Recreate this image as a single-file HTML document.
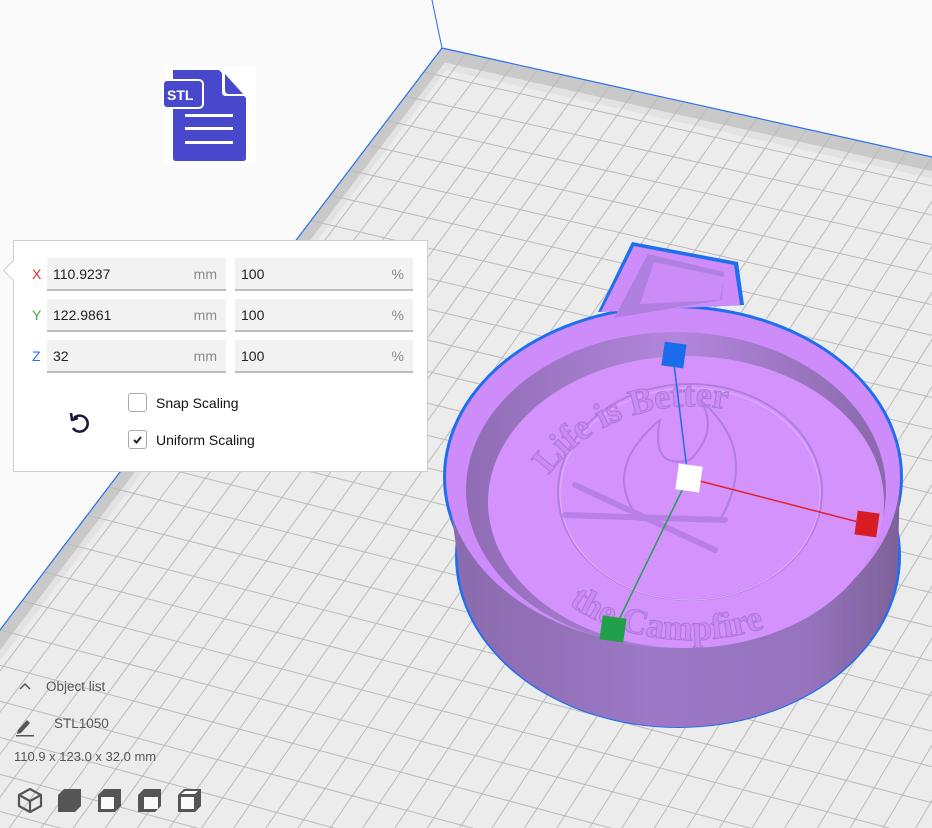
<!DOCTYPE html>
<html><head><meta charset="utf-8">
<style>
html,body{margin:0;padding:0;width:932px;height:828px;overflow:hidden;background:#fafafa;font-family:"Liberation Sans",sans-serif;}
#scene{position:absolute;left:0;top:0;}
.panel{position:absolute;left:13px;top:240px;width:415px;height:232px;background:#fff;border:1px solid #cfcfcf;box-sizing:border-box;}
.arrow{position:absolute;left:-8px;top:22px;width:14px;height:14px;background:#fff;border-left:1px solid #cfcfcf;border-bottom:1px solid #cfcfcf;transform:rotate(45deg);}
.lbl{position:absolute;left:18px;font-size:14px;}
.fld{position:absolute;height:33px;background:#f2f2f2;border-bottom:2px solid #bdbdbd;box-sizing:border-box;font-size:14px;color:#222;}
.fld span.v{position:absolute;left:6px;top:8px;}
.fld span.u{position:absolute;right:9px;top:8px;color:#8a8a8a;}
.cb{position:absolute;left:114px;width:19px;height:19px;border:1px solid #aaa;border-radius:3px;box-sizing:border-box;background:#fff;}
.cbt{position:absolute;left:142px;font-size:14px;color:#111;}
.bt{position:absolute;font-size:13.5px;color:#555;}
</style></head><body>
<svg id="scene" width="932" height="828" viewBox="0 0 932 828" xmlns="http://www.w3.org/2000/svg">
<defs>
 <linearGradient id="side" x1="0" y1="0" x2="1" y2="0">
  <stop offset="0" stop-color="#8a6aad"/><stop offset="0.45" stop-color="#9c78c6"/><stop offset="0.8" stop-color="#9673be"/><stop offset="1" stop-color="#7d6198"/>
 </linearGradient>
 <linearGradient id="wall" x1="0" y1="0" x2="1" y2="0">
  <stop offset="0" stop-color="#8f6cb4"/><stop offset="0.5" stop-color="#b286dc"/><stop offset="1" stop-color="#8a69ab"/>
 </linearGradient>
</defs>
<g id="plate"></g>
<line x1="432" y1="0" x2="442" y2="48" stroke="#2a6ff0" stroke-width="1"/>
<g id="obj">
 <ellipse cx="678" cy="556" rx="223" ry="172" fill="#1e6ff0"/>
 <ellipse cx="673" cy="477" rx="230" ry="172" fill="#1e6ff0"/>
 <path d="M598 312 L632 242 L738 262 L744 305 Z" fill="#1e6ff0"/>
 <ellipse cx="678" cy="556" rx="220" ry="169" fill="url(#side)"/>
 <path d="M447 482 L458 560 A220 169 0 0 0 898 556 L900 480 Z" fill="url(#side)"/>
 <ellipse cx="673" cy="477" rx="227" ry="169" fill="#cd8cfa"/>
 <path d="M601 312 L634 246 L734 265 L740 305 Z" fill="#cd8cfa"/>
 <path d="M614 318 L648 254 L724 272 L722 300 Z" fill="#b080e0"/>
 <path d="M654 262 L724 277 L720 300 L640 304 Z" fill="#cb8cf8"/>
 <ellipse cx="676" cy="490" rx="210" ry="158" fill="url(#wall)"/>
 <ellipse cx="686" cy="502" rx="198" ry="146" fill="#d493fc"/>
 <ellipse cx="690" cy="492" rx="132" ry="108" fill="none" stroke="#b17ee0" stroke-width="2"/>
 <ellipse cx="690" cy="494" rx="130" ry="106" fill="none" stroke="#e3b0ff" stroke-width="1"/>
 <path id="arcT" d="M530 520 A165 135 0 0 1 850 500" fill="none"/>
 <path id="arcB" d="M520 520 A170 120 0 0 0 860 520" fill="none"/>
 <text font-family="Liberation Serif,serif" font-size="36" font-weight="bold" fill="#cc8af5" stroke="#a878d6" stroke-width="1"><textPath href="#arcT" startOffset="12%">Life is Better</textPath></text>
 <text font-family="Liberation Serif,serif" font-size="36" font-weight="bold" fill="#cc8af5" stroke="#a878d6" stroke-width="1"><textPath href="#arcB" startOffset="22%">the Campfire</textPath></text>
 <path d="M640 520 Q600 470 660 420 Q650 470 690 460 Q720 430 700 400 Q760 450 720 520 Z" fill="none" stroke="#b17ee0" stroke-width="2"/>
 <path d="M575 485 L715 550 M565 515 L725 520" stroke="#b880e6" stroke-width="6" fill="none" stroke-linecap="round"/>
 <line x1="688" y1="478" x2="673" y2="356" stroke="#1e6ff0" stroke-width="1.5"/>
 <line x1="688" y1="478" x2="866" y2="524" stroke="#e0202a" stroke-width="1.5"/>
 <line x1="688" y1="478" x2="614" y2="630" stroke="#20a050" stroke-width="1.5"/>
 <rect x="663" y="343" width="22" height="24" fill="#1a6cec" transform="rotate(8 674 355)"/>
 <rect x="856" y="512" width="22" height="24" fill="#d81c24" transform="rotate(8 867 524)"/>
 <rect x="601" y="617" width="24" height="24" fill="#20a048" transform="rotate(8 613 629)"/>
 <rect x="677" y="465" width="24" height="26" fill="#ffffff" transform="rotate(8 689 478)"/>
</g>
<rect x="165" y="67" width="91" height="97" fill="#fff"/>
<path d="M173 70 L219 70 L246 98 L246 158 Q246 161 243 161 L176 161 Q173 161 173 158 Z" fill="#4848cc"/>
<path d="M222 70 L246 96 L226 96 Q222 96 222 92 Z" fill="#fff"/>
<path d="M225 74 L243 94 L229 94 Q225 94 225 90 Z" fill="#4848cc"/>
<rect x="163" y="80" width="40" height="28" rx="4" fill="#4848cc" stroke="#fff" stroke-width="2"/>
<text x="167" y="100" font-size="14" font-weight="bold" fill="#fff" font-family="Liberation Sans,sans-serif">STL</text>
<rect x="185" y="114" width="48" height="3" fill="#fff"/>
<rect x="185" y="127" width="48" height="3" fill="#fff"/>
<rect x="185" y="141" width="48" height="3" fill="#fff"/>
<path d="M20 689 L25 684 L30 689" fill="none" stroke="#555" stroke-width="1.5"/>
<path d="M18 730 L27 720 L30 723 L21 733 L17 734 Z" fill="#555"/>
<rect x="16" y="735" width="18" height="1.5" fill="#555"/>
<g fill="none" stroke="#555" stroke-width="2.2" stroke-linejoin="round">
 <path d="M30 789 L41 795 L41 806 L30 812 L19 806 L19 795 Z M19 795 L30 801 L41 795 M30 801 L30 812"/>
</g>
<g fill="#555">
 <path d="M58 795 L64 789 L81 789 L81 806 L75 812 L58 812 Z"/>
 <path d="M98 795 L104 789 L121 789 L121 806 L115 812 L98 812 Z"/>
 <path d="M138 795 L144 789 L161 789 L161 806 L155 812 L138 812 Z"/>
 <path d="M178 795 L184 789 L201 789 L201 806 L195 812 L178 812 Z"/>
</g>
<g fill="#fafafa">
 <path d="M101 797 L114 797 L114 809 L101 809 Z"/>
 <path d="M144 797 L158 797 L158 809 L144 809 Z"/>
 <path d="M181 797 L194 797 L194 809 L181 809 Z"/>
 <path d="M181 794 L185 791 L198 791 L195 794 Z"/>
</g>
</svg>

<div class="panel"><div class="arrow"></div>
 <div class="lbl" style="top:25px;color:#e0302a">X</div>
 <div class="lbl" style="top:66px;color:#4aa84a">Y</div>
 <div class="lbl" style="top:107px;color:#2a6ff0">Z</div>
 <div class="fld" style="left:33px;top:17px;width:179px"><span class="v">110.9237</span><span class="u">mm</span></div>
 <div class="fld" style="left:221px;top:17px;width:178px"><span class="v">100</span><span class="u">%</span></div>
 <div class="fld" style="left:33px;top:58px;width:179px"><span class="v">122.9861</span><span class="u">mm</span></div>
 <div class="fld" style="left:221px;top:58px;width:178px"><span class="v">100</span><span class="u">%</span></div>
 <div class="fld" style="left:33px;top:99px;width:179px"><span class="v">32</span><span class="u">mm</span></div>
 <div class="fld" style="left:221px;top:99px;width:178px"><span class="v">100</span><span class="u">%</span></div>
 <div class="cb" style="top:152px"></div><div class="cbt" style="top:154px">Snap Scaling</div>
 <div class="cb" style="top:189px"><svg width="17" height="17" style="position:absolute;left:0;top:0"><path d="M5 9 L7.5 11.5 L12 6" fill="none" stroke="#222" stroke-width="2"/></svg></div><div class="cbt" style="top:191px">Uniform Scaling</div>
 <svg width="30" height="30" style="position:absolute;left:51px;top:167px"><path d="M9 10 A8 8 0 1 1 8 20" fill="none" stroke="#1b1b3a" stroke-width="2.6"/><path d="M6 5 L7 12 L13 10" fill="none" stroke="#1b1b3a" stroke-width="2.6" stroke-linejoin="round"/></svg>
</div>
<div class="bt" style="left:46px;top:679px">Object list</div>
<div class="bt" style="left:54px;top:716px">STL1050</div>
<div class="bt" style="left:14px;top:749px;font-size:13px">110.9 x 123.0 x 32.0 mm</div>

<script>
(function(){
function solve(A,b){var n=b.length;for(var i=0;i<n;i++){var m=i;for(var r=i+1;r<n;r++)if(Math.abs(A[r][i])>Math.abs(A[m][i]))m=r;var t=A[i];A[i]=A[m];A[m]=t;t=b[i];b[i]=b[m];b[m]=t;for(var r=i+1;r<n;r++){var f=A[r][i]/A[i][i];for(var c=i;c<n;c++)A[r][c]-=f*A[i][c];b[r]-=f*b[i];}}var x=new Array(n);for(var i=n-1;i>=0;i--){var s=b[i];for(var c=i+1;c<n;c++)s-=A[i][c]*x[c];x[i]=s/A[i][i];}return x;}
var src=[[0,0],[20,0],[0,22],[20,22]],dst=[[442,48],[932,157],[0,630],[530,770]];
var A=[],b=[];for(var i=0;i<4;i++){var u=src[i][0],v=src[i][1],X=dst[i][0],Y=dst[i][1];A.push([u,v,1,0,0,0,-u*X,-v*X]);b.push(X);A.push([0,0,0,u,v,1,-u*Y,-v*Y]);b.push(Y);}
var h=solve(A,b);
function P(u,v){var w=h[6]*u+h[7]*v+1;return [(h[0]*u+h[1]*v+h[2])/w,(h[3]*u+h[4]*v+h[5])/w];}
var g=document.getElementById('plate'),s='';
function poly(pts,fill){s+='<polygon points="'+pts.map(function(p){return p[0].toFixed(1)+','+p[1].toFixed(1)}).join(' ')+'" fill="'+fill+'"/>';}
var M=40;
poly([P(0,0),P(M,0),P(M,M),P(0,M)],'#ececec');
poly([P(0,0),P(M,0),P(M,0.5),P(0.5,0.5),P(0.5,M),P(0,M)],'#c9c9c9');
poly([P(0.5,0.5),P(M,0.5),P(M,0.75),P(0.75,0.75),P(0.75,M),P(0.5,M)],'#e2e2e2');
for(var k=1;k<=M;k++){var a=P(k,0),c=P(k,M);s+='<line x1="'+a[0]+'" y1="'+a[1]+'" x2="'+c[0]+'" y2="'+c[1]+'" stroke="#bbbbbb" stroke-width="1"/>';a=P(0,k);c=P(M,k);s+='<line x1="'+a[0]+'" y1="'+a[1]+'" x2="'+c[0]+'" y2="'+c[1]+'" stroke="#bbbbbb" stroke-width="1"/>';}
var o=P(0,0),e1=P(M,0),e2=P(0,M);
s+='<line x1="'+o[0]+'" y1="'+o[1]+'" x2="'+e1[0]+'" y2="'+e1[1]+'" stroke="#2a6ff0" stroke-width="1.2"/>';
s+='<line x1="'+o[0]+'" y1="'+o[1]+'" x2="'+e2[0]+'" y2="'+e2[1]+'" stroke="#2a6ff0" stroke-width="1.2"/>';
g.innerHTML=s;
})();
</script>
</body></html>
